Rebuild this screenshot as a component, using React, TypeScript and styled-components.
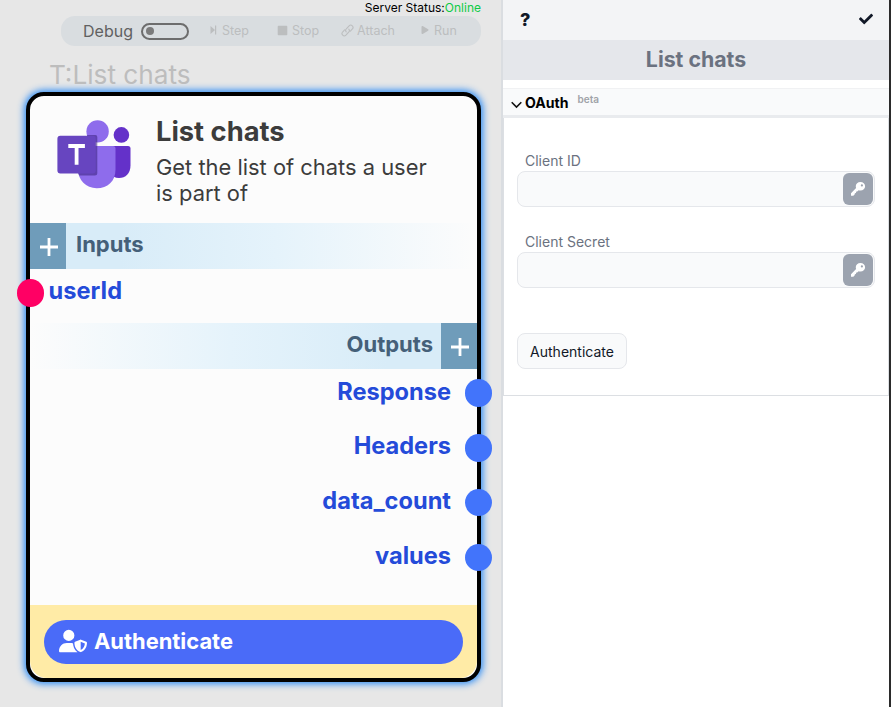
import React from "react";
import styled, { createGlobalStyle } from "styled-components";
import { FaCheck, FaPlay, FaStop } from "react-icons/fa";
import { FaUserShield } from "react-icons/fa6";

const Global = createGlobalStyle`
  * { box-sizing: border-box; }
  body { margin: 0; overflow: hidden; font-family: Inter, sans-serif; }
  button, input { font: inherit; }
`;

const Page = styled.div`
  display: flex;
  width: 891px;
  height: 707px;
  background: #fff;
  border-right: 2px solid #2b2b2b;
`;

const Canvas = styled.main`
  width: 503px;
  flex: none;
  background: #e7e7e7;
  border-right: 2px solid #dadde1;
`;

const Status = styled.div`
  height: 16px;
  padding-right: 20px;
  text-align: right;
  font-size: 12px;
  line-height: 16px;
  color: #000;
  span { color: #0fcb46; }
`;

const Toolbar = styled.div`
  display: flex;
  align-items: center;
  width: 420px;
  height: 30px;
  margin-left: 61px;
  padding-left: 22px;
  border-radius: 14px;
  background: #d9dde0;
`;

const DebugLabel = styled.span`
  width: 58px;
  font-size: 16px;
  line-height: 28px;
  color: #616161;
`;

const Toggle = styled.span`
  display: flex;
  align-items: center;
  width: 48px;
  height: 17px;
  padding-left: 3px;
  border: 2px solid #6d6d6d;
  border-radius: 9px;
  &::after {
    content: "";
    width: 8px;
    height: 8px;
    border-radius: 50%;
    background: #7b7b7b;
  }
`;

const Tool = styled.span<{ $gap: number; $space: number }>`
  display: flex;
  align-items: center;
  gap: ${(p) => p.$space}px;
  margin-left: ${(p) => p.$gap}px;
  font-size: 12.5px;
  line-height: 28px;
  color: #bcbebf;
  svg { margin-bottom: 2px; }
`;

const NodeTag = styled.div`
  height: 46px;
  padding: 11px 0 0 49px;
  font-size: 26.2px;
  line-height: 36px;
  color: #bdbdbd;
`;

const NodeCard = styled.section`
  width: 455px;
  height: 590px;
  margin-left: 26px;
  display: flex;
  flex-direction: column;
  border: 4px solid #000;
  border-radius: 18px;
  background: #fcfcfc;
  box-shadow: 0 0 7px 2px #2d8cf5;
`;

const NodeHeader = styled.header`
  display: flex;
  flex: none;
  height: 127px;
  padding: 21px 0 0 25px;
`;

const NodeText = styled.div`
  padding-left: 25px;
  color: #3c3c3c;
  h1 { margin: 0; font-size: 27.3px; line-height: 29px; font-weight: 700; }
  p { margin: 8px 0 0; font-size: 21.9px; line-height: 26px; }
`;

const Band = styled.div<{ $end?: boolean }>`
  display: flex;
  flex-direction: ${(p) => (p.$end ? "row-reverse" : "row")};
  height: 45.6px;
  flex: none;
  background: linear-gradient(${(p) => (p.$end ? "to left" : "to right")}, #d8ecf8 20%, #e5f3fb 55%, #fcfcfc 100%);
  font-size: 22px;
  line-height: 43px;
  font-weight: 700;
  color: #456079;
`;

const AddButton = styled.span<{ $end?: boolean }>`
  display: flex;
  justify-content: center;
  padding: 15px 0 0 1px;
  width: 36px;
  margin: ${(p) => (p.$end ? "0 0 0 8px" : "0 10px 0 0")};
  background: #6f9cba;
`;

const Port = styled.div<{ $end?: boolean }>`
  display: flex;
  align-items: center;
  flex-direction: ${(p) => (p.$end ? "row-reverse" : "row")};
  height: 54.7px;
  flex: none;
  gap: ${(p) => (p.$end ? 13.5 : 4.5)}px;
  margin: ${(p) => (p.$end ? "0 -15px 0 0" : "0 0 0 -13.4px")};
  padding-bottom: 6px;
  font-size: 23.6px;
  font-weight: 700;
  color: #244bd9;
  span { padding-bottom: 4px; }
`;

const Dot = styled.i<{ $input?: boolean }>`
  width: 27.5px;
  height: 27.5px;
  border-radius: 50%;
  background: ${(p) => (p.$input ? "#ff0064" : "#4274fb")};
  z-index: 1;
`;

const NodeFooter = styled.footer`
  height: 73px;
  margin-top: auto;
  padding: 15px 14px;
  background: #ffeba6;
  border-radius: 0 0 17px 17px;
`;

const NodeAuth = styled.button`
  display: flex;
  align-items: center;
  gap: 7px;
  width: 100%;
  height: 44px;
  padding: 0 15px 2px;
  border: 0;
  border-radius: 22px;
  background: #4a6bf8;
  color: #fff;
  font-size: 21.9px;
  font-weight: 700;
`;

const Panel = styled.aside`
  flex: 1;
`;

const PanelTop = styled.div`
  display: flex;
  justify-content: space-between;
  height: 40px;
  padding: 12px 16px 0 17px;
  background: #f3f4f6;
  color: #111827;
`;

const HelpMark = styled.span`
  font-size: 18px;
  line-height: 16px;
  font-weight: 800;
`;

const PanelTitle = styled.h2`
  height: 40px;
  margin: 0;
  background: #e5e7eb;
  color: #6b7280;
  font-size: 21.3px;
  line-height: 39px;
  font-weight: 700;
  text-align: center;
`;

const SectionHead = styled.div`
  display: flex;
  height: 30px;
  margin-top: 8px;
  padding-left: 7px;
  border-top: 1px solid #f0f1f3;
  border-bottom: 3px solid #e9ebee;
  background: #f9fafb;
  font-size: 14.1px;
  line-height: 27px;
  font-weight: 700;
  color: #000;
  svg { margin: 12px 3px 0 1px; }
  small { margin-left: 9px; font-size: 10px; line-height: 20px; font-weight: 600; color: #a0a3a8; }
`;

const SectionBody = styled.div`
  height: 278px;
  padding: 33px 13px 0;
  border: 1px solid #dcdfe3;
  border-top: 0;
`;

const Field = styled.label`
  display: block;
  height: 81px;
  font-size: 14px;
  line-height: 20px;
  color: #6b7280;
  > span { display: block; padding-left: 8px; }
`;

const InputBox = styled.div`
  display: flex;
  width: 358px;
  height: 36px;
  border: 1px solid #e5e7eb;
  border-radius: 8px;
  background: #f9fafb;
  input { flex: 1; min-width: 0; border: 0; background: transparent; outline: 0; }
`;

const KeyButton = styled.button`
  display: flex;
  align-items: center;
  justify-content: center;
  width: 30px;
  height: 32px;
  margin: 1px;
  padding: 0;
  border: 0;
  border-radius: 6px;
  background: #9ca3af;
  color: #fff;
`;

const PlainButton = styled.button`
  width: 110px;
  height: 36px;
  margin-top: 20px;
  padding: 0;
  border: 1px solid #e5e7eb;
  border-radius: 8px;
  background: #f9fafb;
  color: #111827;
  font-size: 14px;
`;

const Plus = () => (
  <svg width="18" height="18" viewBox="0 0 18 18" stroke="#fff" strokeWidth="2.8">
    <path d="M9 0v18M0 9h18" />
  </svg>
);

const StepIcon = () => (
  <svg width="7" height="10" viewBox="0 0 7 10" fill="currentColor">
    <path d="M.5 1 5 5 .5 9zM5 .5h1.2v9H5z" />
  </svg>
);

const LinkIcon = () => (
  <svg width="13" height="13" viewBox="0 0 13 13" fill="none" stroke="currentColor" strokeWidth="1.1" strokeLinecap="round">
    <path d="M5.2 7.8a2.2 2.2 0 0 1 .1-3l2.8-3a2.3 2.3 0 0 1 3.3 3.2L9.4 7.1" />
    <path d="M7.8 5.2a2.2 2.2 0 0 1-.1 3l-2.8 3a2.3 2.3 0 0 1-3.3-3.2l2-2.1" />
  </svg>
);

const KeyIcon = () => (
  <svg width="16" height="16" viewBox="0 0 16 16" fill="currentColor">
    <path
      fillRule="evenodd"
      d="M10.4 1c2.7 0 4.7 1.8 4.7 4.2s-2 4.3-4.7 4.3c-.7 0-1.3-.1-1.8-.3l-1.4 1.3-.9.1-.4 1.3-1 .3-.3 1.2-1.3 1.4H1v-2.5l5.1-5.2A4.4 4.4 0 0 1 5.8 5C5.8 2.7 7.8 1 10.4 1zm1.5 2.3a1.1 1.1 0 1 0 0 2.2 1.1 1.1 0 0 0 0-2.2z"
    />
  </svg>
);

const TeamsLogo = () => (
  <svg width="76" height="72" viewBox="0 0 76 72">
    <circle cx="66.4" cy="17.9" r="7.8" fill="#6431c9" />
    <path d="M57 29h16a2.5 2.5 0 0 1 2.5 2.5v17c0 8-5 12.5-11.5 12.5-4 0-7-2-9-5z" fill="#6431c9" />
    <circle cx="42.6" cy="14.4" r="11.2" fill="#8e6cec" />
    <path d="M24 29h34a2.5 2.5 0 0 1 2.5 2.5v21c0 12-8 18.7-18.8 18.7S23 63 23 52z" fill="#8e6cec" />
    <path d="M32 18h8.5q1.8 0 1.8 2V56q0 2.5-2.5 2.5H24l-1-2.5h16z" fill="#39207c" opacity=".55" />
    <rect x="2.4" y="18.8" width="38.3" height="37.8" rx="3" fill="#6745c0" />
    <path d="M13.3 29h16.6M21.6 28.5v19.2" stroke="#fff" strokeWidth="3.8" />
  </svg>
);

const outputs = ["Response", "Headers", "data_count", "values"];

export default function App() {
  return (
    <>
      <Global />
      <Page>
        <Canvas>
          <Status>Server Status:<span>Online</span></Status>
          <Toolbar>
            <DebugLabel>Debug</DebugLabel>
            <Toggle />
            <Tool $gap={21} $space={5}><StepIcon />Step</Tool>
            <Tool $gap={28} $space={4}><FaStop size={11} />Stop</Tool>
            <Tool $gap={22} $space={3}><LinkIcon />Attach</Tool>
            <Tool $gap={26} $space={5}><FaPlay size={8} />Run</Tool>
          </Toolbar>
          <NodeTag>T:List chats</NodeTag>
          <NodeCard>
            <NodeHeader>
              <TeamsLogo />
              <NodeText>
                <h1>List chats</h1>
                <p>Get the list of chats a user<br />is part of</p>
              </NodeText>
            </NodeHeader>
            <Band><AddButton><Plus /></AddButton>Inputs</Band>
            <Port><Dot $input /><span>userId</span></Port>
            <Band $end><AddButton $end><Plus /></AddButton>Outputs</Band>
            {outputs.map((name) => (
              <Port $end key={name}><Dot /><span>{name}</span></Port>
            ))}
            <NodeFooter>
              <NodeAuth><FaUserShield size={28} />Authenticate</NodeAuth>
            </NodeFooter>
          </NodeCard>
        </Canvas>
        <Panel>
          <PanelTop><HelpMark>?</HelpMark><FaCheck size={14} /></PanelTop>
          <PanelTitle>List chats</PanelTitle>
          <SectionHead>
            <svg width="11" height="8" viewBox="0 0 11 8" fill="none" stroke="#111" strokeWidth="1.6">
              <path d="M.7 1.2 5.5 6l4.8-4.8" />
            </svg>
            OAuth<small>beta</small>
          </SectionHead>
          <SectionBody>
            {["Client ID", "Client Secret"].map((label) => (
              <Field key={label}>
                <span>{label}</span>
                <InputBox><input /><KeyButton type="button"><KeyIcon /></KeyButton></InputBox>
              </Field>
            ))}
            <PlainButton>Authenticate</PlainButton>
          </SectionBody>
        </Panel>
      </Page>
    </>
  );
}
